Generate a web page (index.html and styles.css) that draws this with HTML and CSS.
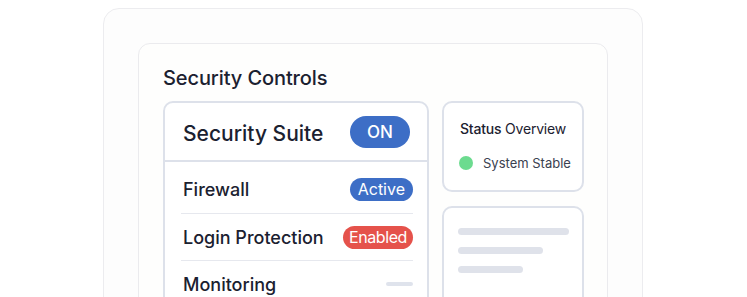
FILE: index.html
```html
<!DOCTYPE html>
<html>
<head>
<meta charset="utf-8">
<link rel="stylesheet" href="styles.css">
</head>
<body>
<div class="outer">
  <div class="inner">
    <h1 class="title">Security Controls</h1>
    <div class="cols">
      <div class="suite">
        <div class="suite-head">
          <span class="suite-name">Security Suite</span>
          <span class="toggle">ON</span>
        </div>
        <div class="rows">
          <div class="row">
            <span class="row-label">Firewall</span>
            <span class="pill pill-blue">Active</span>
          </div>
          <div class="row">
            <span class="row-label">Login Protection</span>
            <span class="pill pill-red">Enabled</span>
          </div>
          <div class="row">
            <span class="row-label">Monitoring</span>
            <span class="dash"></span>
          </div>
        </div>
      </div>
      <div class="side">
        <div class="card status">
          <div class="status-title"><span class="strong">Status</span> Overview</div>
          <div class="status-line"><span class="dot"></span><span>System Stable</span></div>
        </div>
        <div class="card lines">
          <span class="bar bar1"></span>
          <span class="bar bar2"></span>
          <span class="bar bar3"></span>
        </div>
      </div>
    </div>
  </div>
</div>
</body>
</html>
```
FILE: styles.css
```css
html, body {
  margin: 0;
  padding: 0;
  background: #ffffff;
  font-family: Inter, "Noto Sans", sans-serif;
  color: #1d2433;
  overflow: hidden;
}
.outer {
  margin: 8px 0 0 103px;
  width: 540px;
  height: 400px;
  box-sizing: border-box;
  border: 1px solid #ececef;
  border-radius: 16px;
  background: #fdfdfd;
  padding: 34px 0 0 34px;
}
.inner {
  width: 470px;
  height: 380px;
  box-sizing: border-box;
  border: 1px solid #ebebee;
  border-radius: 12px;
  background: #fefefd;
  padding: 21px 0 0 24px;
}
.title {
  margin: 0;
  font-size: 20px;
  font-weight: 500;
  line-height: 26px;
  color: #1b2130;
  letter-spacing: -0.1px;
}
.cols {
  display: flex;
  gap: 13px;
  margin-top: 10px;
}
.suite {
  width: 266px;
  box-sizing: border-box;
  border: 2px solid #dde1ea;
  border-radius: 10px;
  background: #fff;
  height: 260px;
}
.suite-head {
  display: flex;
  align-items: center;
  justify-content: space-between;
  height: 57px;
  padding: 0 17px 0 18px;
  border-bottom: 2px solid #dde1ea;
}
.suite-name {
  font-size: 21px;
  font-weight: 500;
  color: #1b2130;
  padding-top: 3px;
}
.toggle {
  width: 60px;
  height: 32px;
  border-radius: 16px;
  background: #3d6ec6;
  color: #fff;
  font-size: 17px;
  font-weight: 500;
  display: flex;
  align-items: center;
  justify-content: center;
}
.rows {
  margin: 0 14px 0 16px;
}
.row {
  display: flex;
  align-items: center;
  justify-content: space-between;
  height: 46px;
  border-bottom: 1px solid #e6e8ee;
}
.row:first-child {
  height: 52px;
  padding-top: 3px;
  box-sizing: border-box;
}
.row:last-child { border-bottom: none; }
.row-label {
  font-size: 18px;
  font-weight: 500;
  color: #1b2130;
  padding-left: 2px;
}
.pill {
  height: 23px;
  border-radius: 12px;
  color: #fff;
  font-size: 16px;
  display: flex;
  align-items: center;
  padding: 0 8px;
}
.pill-blue { background: #3d6ec6; }
.pill-red {
  background: #e5524b;
  padding: 0 6px;
  letter-spacing: -0.4px;
}
.dash {
  width: 27px;
  height: 4px;
  border-radius: 2px;
  background: #dfe3ec;
}
.side {
  display: flex;
  flex-direction: column;
  gap: 14px;
}
.card {
  width: 142px;
  box-sizing: border-box;
  border: 2px solid #dde1ea;
  border-radius: 10px;
  background: #fff;
}
.status {
  height: 91px;
  padding: 17px 0 0 14px;
}
.status-title {
  font-size: 14px;
  color: #1b2130;
  text-align: center;
  white-space: nowrap;
  margin-left: -14px;
  letter-spacing: -0.2px;
}
.strong { font-weight: 500; }
.status-line {
  display: flex;
  align-items: center;
  gap: 10px;
  margin-top: 18px;
  padding-left: 1px;
  font-size: 13px;
  color: #3a4150;
  white-space: nowrap;
}
.dot {
  width: 14px;
  height: 14px;
  border-radius: 50%;
  background: #6cdb8f;
}
.lines {
  height: 120px;
  padding: 20px 0 0 14px;
  display: flex;
  flex-direction: column;
  gap: 12px;
}
.bar {
  display: block;
  height: 7px;
  border-radius: 4px;
  background: #dfe2ea;
}
.bar1 { width: 111px; }
.bar2 { width: 85px; }
.bar3 { width: 65px; }
```
